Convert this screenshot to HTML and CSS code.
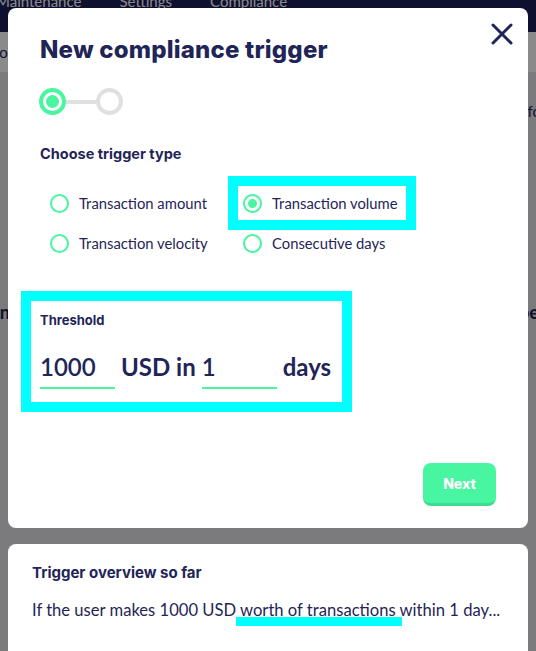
FILE: index.html
```html
<!DOCTYPE html>
<html lang="en">
<head>
  <meta charset="UTF-8" />
  <meta name="viewport" content="width=device-width, initial-scale=1.0"/>
  <title>New compliance trigger</title>
  <link rel="stylesheet" href="styles.css">
</head>
<body>

  <div class="topnav">
    <a href="#">Maintenance</a>
    <a href="#">Settings</a>
    <a href="#">Compliance</a>
  </div>

  <div class="subnav">
    <span>Info</span>
  </div>

  <div class="page">
    <div class="page-row">
      <span></span>
      <span>Info</span>
    </div>
    <div class="page-row big">
      <span>Min</span>
      <span>Type</span>
    </div>
  </div>

  <div class="overlay"></div>

  <div class="modal">
    <button class="close-btn" aria-label="Close">
      <svg width="22" height="22" viewBox="0 0 22 22">
        <path d="M2 2 L20 20 M20 2 L2 20" stroke="#1f2557" stroke-width="3" stroke-linecap="round"/>
      </svg>
    </button>

    <h1>New compliance trigger</h1>

    <div class="stepper">
      <span class="step active"></span>
      <span class="step-line"></span>
      <span class="step"></span>
    </div>

    <h4>Choose trigger type</h4>

    <div class="options">
      <label class="option"><span class="radio"></span>Transaction amount</label>
      <label class="option highlight"><span class="radio checked"></span>Transaction volume</label>
      <label class="option"><span class="radio"></span>Transaction velocity</label>
      <label class="option"><span class="radio"></span>Consecutive days</label>
    </div>

    <div class="threshold">
      <h4>Threshold</h4>
      <div class="threshold-row">
        <span class="field">1000</span>
        <span class="unit">USD in</span>
        <span class="field">1</span>
        <span class="unit">days</span>
      </div>
    </div>

    <div class="actions">
      <button class="next-btn">Next</button>
    </div>
  </div>

  <div class="overview">
    <h4>Trigger overview so far</h4>
    <p>If the user makes 1000 USD <span class="mark">worth of transactions</span> within 1 day...</p>
  </div>

</body>
</html>
```

FILE: styles.css
```css
* {
  margin: 0;
  padding: 0;
  box-sizing: border-box;
}

body {
  font-family: 'Lato', sans-serif;
  background-color: #e4e4e8;
  color: #1f2557;
  overflow: hidden;
  height: 651px;
}

.topnav {
  height: 32px;
  background-color: #1c1e59;
  display: flex;
  gap: 38px;
  margin-left: -4px;
}

.topnav a {
  color: #fff;
  text-decoration: none;
  font-size: 15px;
  line-height: 15px;
  margin-top: -6px;
}

.subnav {
  height: 40px;
  background-color: #fff;
  display: flex;
  align-items: center;
  margin-left: -18px;
  font-size: 15px;
  color: #1f2557;
}

.page-row {
  display: flex;
  justify-content: space-between;
  margin-right: -5px;
  font-size: 15px;
  margin-top: 30px;
}

.page-row.big {
  font-size: 18px;
  font-weight: 900;
  margin-top: 181px;
  margin-left: -22px;
  margin-right: -3px;
}

.overlay {
  position: fixed;
  inset: 0;
  background: rgba(0, 0, 0, 0.46);
}

.modal {
  position: fixed;
  top: 8px;
  left: 8px;
  width: 520px;
  height: 520px;
  background: #fff;
  border-radius: 8px;
  padding: 28px 32px 22px;
  display: flex;
  flex-direction: column;
}

.close-btn {
  position: absolute;
  top: 15px;
  right: 15px;
  background: none;
  border: none;
  cursor: pointer;
  line-height: 0;
}

h1 {
  font-family: 'Inter', sans-serif;
  font-weight: 800;
  font-size: 24px;
  line-height: 28px;
  letter-spacing: 0.2px;
  color: #1f2557;
}

h4 {
  font-family: 'Inter', sans-serif;
  font-weight: 700;
  font-size: 14.5px;
  color: #1f2557;
}

.stepper {
  display: flex;
  align-items: center;
  margin-top: 24px;
  margin-left: -1px;
}

.step {
  width: 27px;
  height: 27px;
  border-radius: 50%;
  border: 4px solid #e0e0e0;
  display: flex;
  align-items: center;
  justify-content: center;
}

.step.active {
  border-color: #4af5a0;
}

.step.active::after {
  content: "";
  width: 13px;
  height: 13px;
  border-radius: 50%;
  background: #4af5a0;
}

.step-line {
  width: 30px;
  height: 4px;
  background: #e0e0e0;
}

.modal > h4 {
  margin-top: 30px;
}

.options {
  display: grid;
  grid-template-columns: 193px 180px;
  margin-top: 21px;
  margin-left: 10px;
}

.option {
  display: flex;
  align-items: center;
  gap: 10px;
  height: 40px;
  font-size: 14.8px;
  color: #1f2557;
  cursor: pointer;
}

.option.highlight {
  margin: -7px 0 -7px -15px;
  height: 54px;
  width: 188px;
  border: 10px solid #00ffff;
  padding-left: 5px;
}

.radio {
  width: 19px;
  height: 19px;
  border-radius: 50%;
  border: 2px solid #4af5a0;
  display: flex;
  align-items: center;
  justify-content: center;
  flex-shrink: 0;
}

.radio.checked::after {
  content: "";
  width: 9px;
  height: 9px;
  border-radius: 50%;
  background: #4af5a0;
}

.threshold {
  margin-top: 28px;
  margin-left: -19px;
  width: 331px;
  border: 10px solid #00ffff;
  padding: 11px 8px 13px 9px;
}

.threshold h4 {
  font-size: 13px;
}

.threshold-row {
  display: flex;
  align-items: flex-end;
  gap: 6px;
  margin-top: 23px;
  font-size: 24px;
}

.field {
  width: 75px;
  border-bottom: 2px solid #4af5a0;
  line-height: 32px;
  padding-bottom: 4px;
  font-weight: 600;
}

.unit {
  line-height: 32px;
  padding-bottom: 6px;
  font-weight: 700;
}

.actions {
  margin-top: auto;
  display: flex;
  justify-content: flex-end;
}

.next-btn {
  width: 73px;
  height: 43px;
  background: #48f5a0;
  border: none;
  border-bottom: 3px solid #3fdc90;
  border-radius: 8px;
  color: #fff;
  font-family: 'Inter', sans-serif;
  font-weight: 800;
  font-size: 14px;
  cursor: pointer;
}

.overview {
  position: fixed;
  top: 544px;
  left: 8px;
  width: 520px;
  height: 140px;
  background: #fff;
  border-radius: 8px;
  padding: 19px 24px;
}

.overview h4 {
  font-size: 15px;
}

.overview p {
  margin-top: 18px;
  font-size: 16.6px;
  color: #1f2557;
}

.mark {
  position: relative;
}

.mark::after {
  content: "";
  position: absolute;
  left: -4px;
  right: -6px;
  bottom: -6px;
  height: 9px;
  background: #00ffff;
}
```
